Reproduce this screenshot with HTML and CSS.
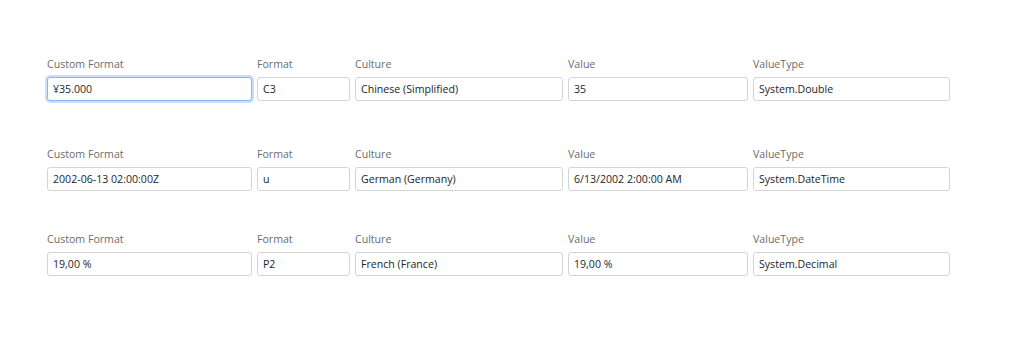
FILE: index.html
```html
<!DOCTYPE html>
<html lang="en">
<head>
  <meta charset="UTF-8">
  <meta name="viewport" content="width=device-width, initial-scale=1.0">
  <title>Format Tester</title>
  <link rel="stylesheet" href="styles.css">
</head>
<body>

<div class="format-container">
  <div class="format-row first">
    <div class="field col-custom">
      <label>Custom Format</label>
      <input type="text" class="focused" value="¥35.000">
    </div>
    <div class="field col-format">
      <label>Format</label>
      <input type="text" value="C3">
    </div>
    <div class="field col-culture">
      <label>Culture</label>
      <input type="text" value="Chinese (Simplified)">
    </div>
    <div class="field col-value">
      <label>Value</label>
      <input type="text" value="35">
    </div>
    <div class="field col-type">
      <label>ValueType</label>
      <input type="text" value="System.Double">
    </div>
  </div>

  <div class="format-row second">
    <div class="field col-custom">
      <label>Custom Format</label>
      <input type="text" value="2002-06-13 02:00:00Z">
    </div>
    <div class="field col-format">
      <label>Format</label>
      <input type="text" value="u">
    </div>
    <div class="field col-culture">
      <label>Culture</label>
      <input type="text" value="German (Germany)">
    </div>
    <div class="field col-value">
      <label>Value</label>
      <input type="text" value="6/13/2002 2:00:00 AM">
    </div>
    <div class="field col-type">
      <label>ValueType</label>
      <input type="text" value="System.DateTime">
    </div>
  </div>

  <div class="format-row third">
    <div class="field col-custom">
      <label>Custom Format</label>
      <input type="text" value="19,00 %">
    </div>
    <div class="field col-format">
      <label>Format</label>
      <input type="text" value="P2">
    </div>
    <div class="field col-culture">
      <label>Culture</label>
      <input type="text" value="French (France)">
    </div>
    <div class="field col-value">
      <label>Value</label>
      <input type="text" value="19,00 %">
    </div>
    <div class="field col-type">
      <label>ValueType</label>
      <input type="text" value="System.Decimal">
    </div>
  </div>
</div>

</body>
</html>
```

FILE: styles.css
```css
body {
  font-family: "Open Sans", "Noto Sans", Arial, sans-serif;
  margin: 0;
  padding: 0;
  background-color: #fff;
  color: #212529;
}

.format-container {
  padding: 57px 0 0 47px;
}

.format-row {
  display: flex;
  gap: 5px;
}

.format-row.second {
  margin-top: 46px;
}

.format-row.third {
  margin-top: 41px;
}

.field {
  display: flex;
  flex-direction: column;
}

.col-custom { width: 205px; }
.col-format { width: 93px; }
.col-culture { width: 208px; }
.col-value { width: 180px; }
.col-type { width: 197px; }

.field label {
  display: block;
  font-size: 10.6px;
  line-height: 15px;
  color: #6c6c6c;
  margin-bottom: 5px;
}

.field input {
  width: 100%;
  height: 24px;
  padding: 0 5px;
  font-family: inherit;
  font-size: 10.6px;
  color: #212529;
  border: 1px solid #d4d4d4;
  border-radius: 3px;
  box-sizing: border-box;
  outline: none;
}

.field input.focused {
  border-color: #86b7fe;
  box-shadow: 0 0 0 2px rgba(13, 110, 253, 0.22);
}
```
